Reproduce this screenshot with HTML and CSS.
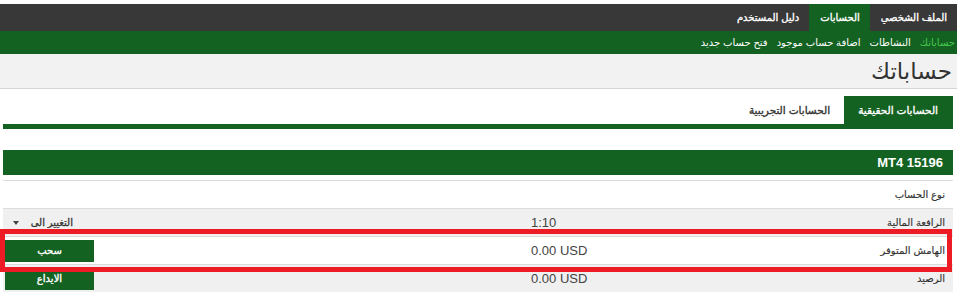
FILE: index.html
```html
<!DOCTYPE html>
<html lang="ar" dir="rtl">
<head>
    <meta charset="UTF-8">
    <title>حساباتك</title>
    <link rel="stylesheet" href="styles.css">
</head>
<body>
    <!-- Top navigation -->
    <div class="topbar">
        <a class="topnav-item" href="#">الملف الشخصي</a>
        <a class="topnav-item active" href="#">الحسابات</a>
        <a class="topnav-item" href="#">دليل المستخدم</a>
    </div>
    <div class="subnav">
        <a class="active" href="#">حساباتك</a>
        <a href="#">النشاطات</a>
        <a href="#">اضافة حساب موجود</a>
        <a href="#">فتح حساب جديد</a>
    </div>

    <div class="page-head">
        <h1>حساباتك</h1>
    </div>

    <div class="content">
        <div class="tabs">
            <div class="tab active">الحسابات الحقيقية</div>
            <div class="tab">الحسابات التجريبية</div>
        </div>

        <div class="account-head">MT4 15196</div>

        <div class="acc-table">
            <div class="acc-row">
                <div class="acc-label">نوع الحساب</div>
                <div class="acc-value"></div>
                <div class="acc-action"></div>
            </div>
            <div class="acc-row alt">
                <div class="acc-label">الرافعة المالية</div>
                <div class="acc-value">1:10</div>
                <div class="acc-action">
                    <span class="change-link">التغيير الى</span>
                    <span class="caret"></span>
                </div>
            </div>
            <div class="acc-row">
                <div class="acc-label">الهامش المتوفر</div>
                <div class="acc-value">0.00 USD</div>
                <div class="acc-action"><a class="btn" href="#">سحب</a></div>
                <div class="highlight"></div>
            </div>
            <div class="acc-row alt">
                <div class="acc-label">الرصيد</div>
                <div class="acc-value">0.00 USD</div>
                <div class="acc-action"><a class="btn" href="#">الايداع</a></div>
            </div>
        </div>
    </div>
</body>
</html>
```

FILE: styles.css
```css
/* Accounts page */
body {
    margin: 0;
    font-family: "Liberation Sans", "DejaVu Sans", sans-serif;
    font-size: 10px;
    color: #333;
    background: #fff;
}

a {
    text-decoration: none;
}

/* arabic bold is too wide in DejaVu, so normal weight gets a thin stroke instead */
.topbar {
    margin-top: 4px;
    height: 27px;
    background: #383838;
    display: flex;
}

.topnav-item {
    color: #fff;
    padding: 0 10px 0 11px;
    line-height: 27px;
    -webkit-text-stroke: 0.35px #fff;
}

.topnav-item.active {
    background: #146221;
}

.subnav {
    height: 23px;
    background: #146221;
    display: flex;
    gap: 9px;
    padding-right: 2px;
    line-height: 23px;
}

.subnav a {
    color: #fff;
}

.subnav a.active {
    color: #44c94f;
}

.page-head {
    background: #f2f2f2;
    height: 34px;
    border-bottom: 1px solid #d4d4d4;
}

.page-head h1 {
    margin: 0;
    padding-right: 5px;
    font-size: 23px;
    font-weight: normal;
    line-height: 34px;
    color: #333;
}

.content {
    padding: 0 4px 0 3px;
}

.tabs {
    margin-top: 7px;
    display: flex;
    border-bottom: 5px solid #146221;
}

.tab {
    height: 28px;
    line-height: 28px;
    padding: 0 14px;
    font-size: 10.5px;
    color: #333;
    -webkit-text-stroke: 0.35px #333;
}

.tab.active {
    padding-right: 15px;
    background: #146221;
    color: #fff;
    -webkit-text-stroke: 0.35px #fff;
}

.account-head {
    margin-top: 21px;
    height: 25px;
    line-height: 25px;
    padding-right: 10px;
    background: #146221;
    color: #fff;
    font-weight: bold;
    font-size: 13px;
}

.acc-table {
    margin-top: 5px;
}

.acc-row {
    position: relative;
    display: grid;
    grid-template-columns: 200px 1fr 528px;
    align-items: center;
    box-sizing: border-box;
    height: 28px;
    border-top: 1px solid #dcdcdc;
}

.acc-row.alt {
    background: #f0f0f0;
}

.acc-label {
    padding-right: 8px;
    -webkit-text-stroke: 0.15px #333;
}

.acc-value {
    direction: ltr;
    text-align: left;
    font-size: 13px;
    color: #444;
}

.acc-action {
    text-align: left;
    padding-left: 2px;
}

.change-link {
    color: #333;
    -webkit-text-stroke: 0.3px #333;
}

.caret {
    display: inline-block;
    width: 0;
    height: 0;
    margin: 0 9px 1px 8px;
    border-top: 4px solid #444;
    border-left: 3px solid transparent;
    border-right: 3px solid transparent;
}

.btn {
    display: inline-block;
    width: 89px;
    height: 22px;
    line-height: 22px;
    text-align: center;
    background: #146221;
    color: #fff;
    -webkit-text-stroke: 0.35px #fff;
    vertical-align: middle;
}

/* red annotation box over the available margin row */
.highlight {
    position: absolute;
    z-index: 1;
    top: -8px;
    left: -3px;
    width: 942px;
    height: 33px;
    border: 5px solid #ed1c24;
    pointer-events: none;
}
```
